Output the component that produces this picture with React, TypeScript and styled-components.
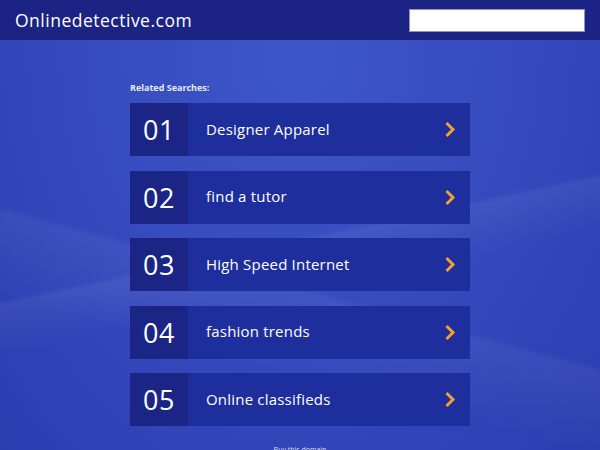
import styled, { createGlobalStyle } from "styled-components";

const GlobalStyle = createGlobalStyle`
  html, body {
    margin: 0;
    padding: 0;
  }
  body {
    font-family: "Open Sans", "Liberation Sans", sans-serif;
    background: #3548bd;
  }
`;

const Page = styled.div`
  width: 600px;
  height: 450px;
  overflow: hidden;
  background:
    linear-gradient(168deg, transparent 52%, rgba(255,255,255,0.06) 53%, transparent 62%),
    linear-gradient(195deg, transparent 60%, rgba(255,255,255,0.05) 61%, transparent 75%),
    radial-gradient(ellipse at 50% 10%, #3d57c8 0%, #3549bd 55%, #2c3db0 100%);
`;

const Header = styled.header`
  height: 40px;
  background: #1b2384;
  display: flex;
  align-items: center;
  justify-content: space-between;
  padding: 0 15px;
  box-sizing: border-box;
`;

const Logo = styled.div`
  color: #ffffff;
  font-size: 17.5px;
  letter-spacing: 0.5px;
`;

const Search = styled.input`
  width: 176px;
  height: 23px;
  border: 1px solid #8d93c8;
  background: #ffffff;
  box-sizing: border-box;
  outline: none;
`;

const Main = styled.main`
  width: 340px;
  margin: 0 auto;
  padding-top: 41px;
`;

const Title = styled.div`
  color: #e6e9fa;
  font-size: 9px;
  font-weight: 700;
  margin-bottom: 9px;
`;

const List = styled.div`
  display: flex;
  flex-direction: column;
  gap: 14.5px;
`;

const Row = styled.a`
  display: flex;
  height: 53px;
  background: #1e2e9d;
  text-decoration: none;
  color: #ffffff;
`;

const Num = styled.div`
  width: 58px;
  background: #1a2586;
  display: flex;
  align-items: center;
  justify-content: center;
  font-size: 27px;
  font-weight: 400;
  letter-spacing: 0.5px;
`;

const Label = styled.div`
  flex: 1;
  padding: 0 0 2px 18px;
  display: flex;
  align-items: center;
  font-size: 15px;
  letter-spacing: 0.2px;
`;

const Arrow = styled.div`
  width: 40px;
  display: flex;
  align-items: center;
  justify-content: center;
`;

const Footer = styled.div`
  text-align: center;
  color: #d6dbf5;
  font-size: 7px;
  margin-top: 19px;
`;

const items = [
  "Designer Apparel",
  "find a tutor",
  "High Speed Internet",
  "fashion trends",
  "Online classifieds",
];

function Chevron() {
  return (
    <svg width="12" height="17" viewBox="0 0 12 17">
      <path d="M2.5 2 L9 8.5 L2.5 15" fill="none" stroke="#f0a035" strokeWidth="3" strokeLinecap="butt" strokeLinejoin="miter" />
    </svg>
  );
}

export default function App() {
  return (
    <>
      <GlobalStyle />
      <Page>
        <Header>
          <Logo>Onlinedetective.com</Logo>
          <Search type="text" />
        </Header>
        <Main>
          <Title>Related Searches:</Title>
          <List>
            {items.map((t, i) => (
              <Row key={t} href="#">
                <Num>{"0" + (i + 1)}</Num>
                <Label>{t}</Label>
                <Arrow>
                  <Chevron />
                </Arrow>
              </Row>
            ))}
          </List>
          <Footer>Buy this domain</Footer>
        </Main>
      </Page>
    </>
  );
}
